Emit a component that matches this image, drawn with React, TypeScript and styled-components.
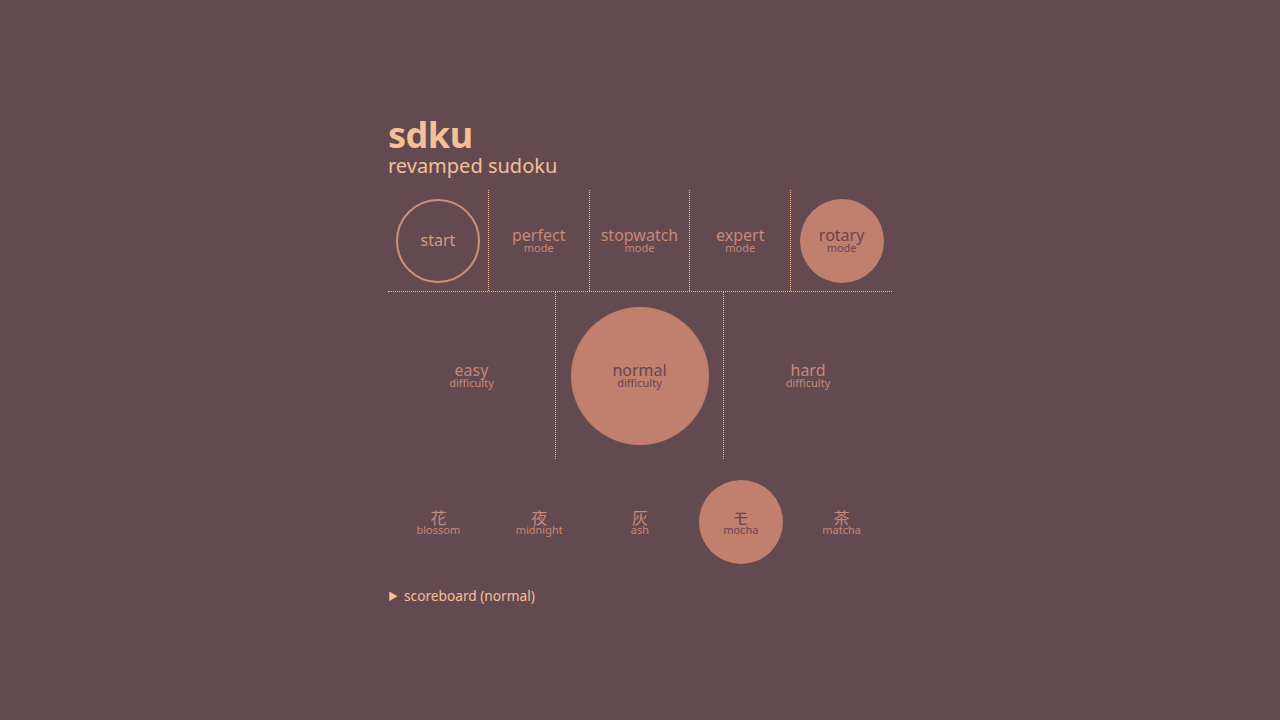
import React, { useState } from 'react'
import styled, { createGlobalStyle, css } from 'styled-components'

const GlobalStyle = createGlobalStyle`
  html, body {
    margin: 0;
    padding: 0;
    background: #634950;
  }
  body {
    font-family: "Noto Sans", "Noto Sans CJK JP", sans-serif;
  }
`

const modes = ['perfect', 'stopwatch', 'expert', 'rotary']
const difficulties = ['easy', 'normal', 'hard']
const themes = [
  { kanji: '花', name: 'blossom' },
  { kanji: '夜', name: 'midnight' },
  { kanji: '灰', name: 'ash' },
  { kanji: 'モ', name: 'mocha' },
  { kanji: '茶', name: 'matcha' },
]

function App() {
  const [mode, setMode] = useState('rotary')
  const [difficulty, setDifficulty] = useState('normal')
  const [theme, setTheme] = useState('mocha')

  return (
    <>
      <GlobalStyle />
      <Page>
        <Menu>
          <Header>
            <Title>sdku</Title>
            <Subtitle>revamped sudoku</Subtitle>
          </Header>

          <ModeRow>
            <Cell divider>
              <StartButton>start</StartButton>
            </Cell>
            {modes.map((m, i) => (
              <Cell key={m} divider={i < modes.length - 1}>
                <Choice active={mode === m} size={84} onClick={() => setMode(m)}>
                  <Label>{m}</Label>
                  <Sub>mode</Sub>
                </Choice>
              </Cell>
            ))}
          </ModeRow>

          <DifficultyRow>
            {difficulties.map((d, i) => (
              <Cell key={d} divider={i < difficulties.length - 1}>
                <Choice active={difficulty === d} size={138} onClick={() => setDifficulty(d)}>
                  <Label>{d}</Label>
                  <Sub>difficulty</Sub>
                </Choice>
              </Cell>
            ))}
          </DifficultyRow>

          <ThemeRow>
            {themes.map((t) => (
              <Cell key={t.name}>
                <Choice active={theme === t.name} size={84} onClick={() => setTheme(t.name)}>
                  <Kanji>{t.kanji}</Kanji>
                  <Sub>{t.name}</Sub>
                </Choice>
              </Cell>
            ))}
          </ThemeRow>

          <Scoreboard>
            <Arrow>▶</Arrow>
            scoreboard ({difficulty})
          </Scoreboard>
        </Menu>
      </Page>
    </>
  )
}

const Page = styled.div`
  min-height: 720px;
  display: flex;
  justify-content: center;
`

const Menu = styled.div`
  width: 504px;
  padding-top: 116px;
  display: flex;
  flex-direction: column;
`

const Header = styled.div`
  display: flex;
  flex-direction: column;
  color: #f4c095;
  margin-bottom: 12px;
`

const Title = styled.div`
  font-size: 36px;
  font-weight: 700;
  line-height: 38px;
  letter-spacing: -0.5px;
`

const Subtitle = styled.div`
  font-size: 20px;
  line-height: 24px;
`

const dotted = '1px dotted #f0bd98'

const ModeRow = styled.div`
  display: grid;
  grid-template-columns: repeat(5, 1fr);
  height: 101px;
  border-bottom: ${dotted};
`

const DifficultyRow = styled.div`
  display: grid;
  grid-template-columns: repeat(3, 1fr);
  height: 167px;
`

const ThemeRow = styled.div`
  display: grid;
  grid-template-columns: repeat(5, 1fr);
  height: 100px;
  margin-top: 13px;
`

const Cell = styled.div<{ divider?: boolean }>`
  display: flex;
  align-items: center;
  justify-content: center;
  ${(p) => p.divider && css`border-right: ${dotted};`}
`

const Choice = styled.button<{ active: boolean; size: number }>`
  width: ${(p) => p.size}px;
  height: ${(p) => p.size}px;
  border-radius: 50%;
  border: none;
  padding: 0;
  font-family: inherit;
  cursor: pointer;
  display: flex;
  flex-direction: column;
  align-items: center;
  justify-content: center;
  background: ${(p) => (p.active ? '#c17f6d' : 'transparent')};
  color: ${(p) => (p.active ? '#6b4450' : '#c48b79')};
`

const StartButton = styled.button`
  width: 84px;
  height: 84px;
  border-radius: 50%;
  border: 2px solid #c8927a;
  background: transparent;
  color: #d49c82;
  font-family: inherit;
  font-size: 16px;
  line-height: 18px;
  padding: 0 0 2px;
  cursor: pointer;
`

const Label = styled.span`
  font-size: 16px;
  line-height: 13px;
`

const Sub = styled.span`
  font-size: 11px;
  line-height: 11px;
`

const Kanji = styled.span`
  font-family: "Noto Sans CJK JP", sans-serif;
  font-size: 16px;
  line-height: 14px;
`

const Scoreboard = styled.div`
  margin-top: 14px;
  color: #f4c095;
  font-size: 13.7px;
  display: flex;
  align-items: center;
  gap: 6px;
`

const Arrow = styled.span`
  font-size: 10px;
`

export default App
